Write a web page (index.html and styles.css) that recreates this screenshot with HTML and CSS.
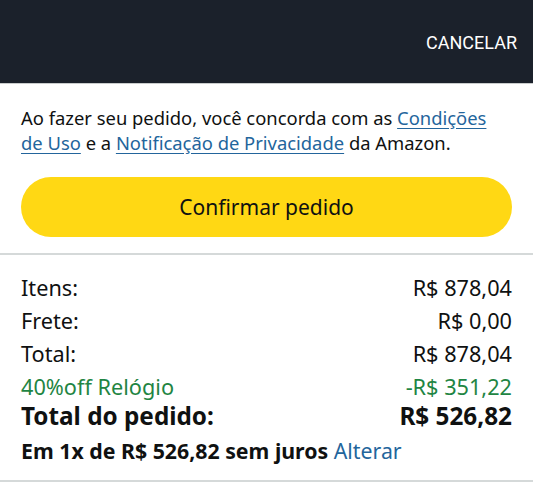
FILE: index.html
```html
<!DOCTYPE html>
<html lang="pt-BR">
<head>
<meta charset="utf-8">
<title>Confirmar pedido</title>
<link rel="stylesheet" href="styles.css">
</head>
<body>
<header class="topbar">
  <span class="cancel">CANCELAR</span>
</header>
<section class="place">
  <p class="terms">Ao fazer seu pedido, você concorda com as <a href="#">Condições de Uso</a> e a <a href="#">Notificação de Privacidade</a> da Amazon.</p>
  <button class="confirm">Confirmar pedido</button>
</section>
<section class="summary">
  <div class="row"><span>Itens:</span><span>R$ 878,04</span></div>
  <div class="row"><span>Frete:</span><span>R$ 0,00</span></div>
  <div class="row"><span>Total:</span><span>R$ 878,04</span></div>
  <div class="row promo"><span>40%off Relógio</span><span>-R$ 351,22</span></div>
  <div class="row grand"><span>Total do pedido:</span><span>R$ 526,82</span></div>
  <p class="installments">Em 1x de R$ 526,82 sem juros <a href="#">Alterar</a></p>
</section>
</body>
</html>
```

FILE: styles.css
```css
* { box-sizing: border-box; }
html, body { margin: 0; padding: 0; background: #ffffff; }
body {
  font-family: "Noto Sans", "Open Sans", sans-serif;
  color: #0f1111;
}
.topbar {
  height: 84px;
  background: #1b212b;
  display: flex;
  align-items: center;
  justify-content: flex-end;
  padding: 0 16px 0 0;
  border-bottom: 1px solid #c9cccc;
}
.cancel {
  font-family: Roboto, "Liberation Sans", sans-serif;
  font-size: 18px;
  color: #ffffff;
  margin-top: 2px;
}
.place {
  padding: 21px 21px 16px;
  border-bottom: 2px solid #d5d9d9;
}
.terms {
  margin: 0;
  padding-right: 16px;
  font-size: 18.4px;
  line-height: 25px;
}
.terms a, .installments a {
  color: #23659c;
}
.terms a { text-decoration: underline; text-underline-offset: 3px; }
.installments a { text-decoration: none; font-weight: 400; }
.confirm {
  display: block;
  width: 100%;
  height: 60px;
  margin-top: 22px;
  border: none;
  border-radius: 30px;
  background: #ffd814;
  font-family: "Noto Sans", "Open Sans", sans-serif;
  font-size: 21px;
  color: #0f1111;
  padding: 0;
}
.summary {
  padding: 16px 21px 16px;
  border-bottom: 2px solid #d5d9d9;
}
.row {
  display: flex;
  justify-content: space-between;
  font-size: 21.7px;
  line-height: 33px;
}
.promo { color: #1f8543; }
.grand {
  font-weight: 700;
  font-size: 24.3px;
  line-height: 26px;
}
.installments {
  margin: 8px 0 0;
  font-size: 21.3px;
  line-height: 27px;
  font-weight: 700;
}
```
